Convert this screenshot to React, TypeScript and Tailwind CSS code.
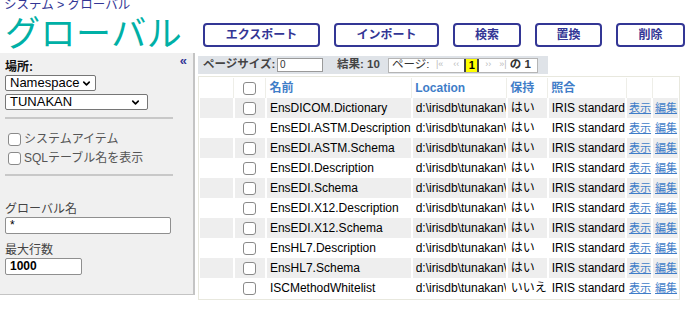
import { ChevronDown } from 'lucide-react'

const rows = [
  ['EnsDICOM.Dictionary', 'はい'],
  ['EnsEDI.ASTM.Description', 'はい'],
  ['EnsEDI.ASTM.Schema', 'はい'],
  ['EnsEDI.Description', 'はい'],
  ['EnsEDI.Schema', 'はい'],
  ['EnsEDI.X12.Description', 'はい'],
  ['EnsEDI.X12.Schema', 'はい'],
  ['EnsHL7.Description', 'はい'],
  ['EnsHL7.Schema', 'はい'],
  ['ISCMethodWhitelist', 'いいえ'],
]

const buttons = [
  { label: 'エクスポート', w: 'w-[117px]' },
  { label: 'インポート', w: 'w-[105px]' },
  { label: '検索', w: 'w-[68px]' },
  { label: '置換', w: 'w-[67px]' },
  { label: '削除', w: 'w-[69px]' },
]

function Box() {
  return <div className="w-[13px] h-[13px] shrink-0 rounded-[3px] border border-[#8a8a8a] bg-white" />
}

export default function App() {
  return (
    <div className="w-[687px] h-[309px] overflow-hidden bg-white font-[Liberation_Sans,Noto_Sans_CJK_JP,sans-serif] text-[12px] text-black">
      {/* header */}
      <div className="flex h-[53px]">
        <div className="w-[196px] pl-[4px]">
          <div className="-mt-[2px] h-[13px] leading-[14px] text-[12.5px] text-[#333695] whitespace-nowrap">システム &gt; グローバル</div>
          <div className="mt-[6px] pl-[1px] text-[35px] leading-[34px] text-[#00b0a6] tracking-[0.5px] whitespace-nowrap">グローバル</div>
        </div>
        <div className="flex items-start pt-[23px] pl-[7px] gap-[14px]">
          {buttons.map((b) => (
            <div
              key={b.label}
              className={`${b.w} h-[24px] flex items-center justify-center rounded-[4px] border-2 border-[#333695] text-[12px] font-bold text-[#333695] whitespace-nowrap`}
            >
              {b.label}
            </div>
          ))}
        </div>
      </div>

      <div className="flex">
        {/* sidebar */}
        <div className="w-[195px] h-[242px] shrink-0 bg-[#f0f0f0] border-r-2 border-b border-[#c4c4c4] pl-[5px] pt-[3px] relative">
          <div className="absolute right-[6px] top-[2px] text-[13px] font-bold leading-[12px] text-[#333695]">«</div>
          <div className="mt-[4px] font-bold text-[12px] leading-[14px] text-[#111]">場所:</div>
          <div className="mt-[1px] w-[91px] h-[16px] flex items-center justify-between border border-[#767676] rounded-[2px] bg-white pl-[4px] pr-[3px] text-[13px] leading-[14px]">
            Namespace
            <ChevronDown className="w-[11px] h-[11px]" strokeWidth={3.5} />
          </div>
          <div className="mt-[3px] w-[143px] h-[16px] flex items-center justify-between border border-[#767676] rounded-[2px] bg-white pl-[4px] pr-[6px] text-[13px] leading-[14px]">
            TUNAKAN
            <ChevronDown className="w-[11px] h-[11px]" strokeWidth={3.5} />
          </div>
          <div className="mt-[7px] w-[168px] border-t-2 border-[#c8c8c8]" />
          <div className="mt-[13px] ml-[3px] h-[14px] flex items-center gap-[3px] text-[12px] leading-[14px] text-[#555]">
            <Box />
            <span>システムアイテム</span>
          </div>
          <div className="mt-[5px] ml-[3px] h-[14px] flex items-center gap-[3px] text-[12px] leading-[14px] text-[#555]">
            <Box />
            <span>SQLテーブル名を表示</span>
          </div>
          <div className="mt-[9px] w-[168px] border-t-2 border-[#c8c8c8]" />
          <div className="mt-[26px] text-[12px] leading-[14px] text-[#444]">グローバル名</div>
          <div className="mt-[1px] w-[166px] h-[17px] border border-[#8f8f8f] rounded-[2px] bg-white pl-[4px] text-[12px] leading-[15px]">*</div>
          <div className="mt-[9px] text-[12px] leading-[14px] text-[#444]">最大行数</div>
          <div className="mt-[1px] w-[77px] h-[17px] border border-[#8f8f8f] rounded-[2px] bg-white pl-[4px] text-[12px] font-bold leading-[15px]">1000</div>
        </div>

        {/* content */}
        <div className="pl-[3px] pt-[3px]">
          <div className="w-[350px] h-[18px] bg-[#dfe3e8] flex items-center pl-[5px] text-[11.5px] font-bold text-[#444] whitespace-nowrap">
            <span className="w-[74px]">ページサイズ:</span>
            <div className="w-[46px] h-[14px] bg-white border border-[#9a9a9a] pl-[2px] text-[10px] font-normal leading-[12px] text-[#333]">0</div>
            <span className="ml-[14px] w-[41px]">結果: 10</span>
            <div className="ml-[10px] h-[15px] w-[150px] bg-white border border-[#b5b5b5] flex items-center pl-[3px]">
              <span className="w-[36px] font-normal text-[#333]">ページ:</span>
              <span className="ml-[8px] text-[9px] font-normal text-[#bbb]">|«</span>
              <span className="ml-[10px] text-[9px] font-normal text-[#bbb]">‹‹</span>
              <span className="ml-[5px] h-[13px] w-[15px] bg-[#ffff00] border-x-2 border-[#444] flex items-center justify-center text-[11px] text-black">1</span>
              <span className="ml-[6px] text-[9px] font-normal text-[#bbb]">››</span>
              <span className="ml-[8px] text-[9px] font-normal text-[#bbb]">»|</span>
              <span className="ml-[3px] text-[#333]">の 1</span>
            </div>
          </div>

          <div className="mt-[2px] w-[482px] border border-[#e8e8de] p-[1px]">
            <table className="border-collapse text-[12px]">
              <thead>
                <tr className="h-[20px] text-left text-[#3f7dc8] font-bold">
                  <th className="w-[35px] border-r border-[#eeeee8]" />
                  <th className="w-[33px] border-r border-[#eeeee8]">
                    <div className="flex justify-center"><Box /></div>
                  </th>
                  <th className="w-[143px] pl-[3px] border-r border-[#eeeee8] font-bold">名前</th>
                  <th className="w-[94px] pl-[3px] border-r border-[#eeeee8] font-bold">Location</th>
                  <th className="w-[40px] pl-[3px] border-r border-[#eeeee8] font-bold">保持</th>
                  <th className="w-[78px] pl-[3px] border-r border-[#eeeee8] font-bold">照合</th>
                  <th className="w-[26px] border-r border-[#eeeee8]" />
                  <th className="w-[26px]" />
                </tr>
              </thead>
              <tbody>
                {rows.map(([name, keep], i) => (
                  <tr key={name} className={`h-[20px] ${i % 2 === 0 ? 'bg-[#eeeeee]' : 'bg-white'}`}>
                    <td className="border-r-2 border-white" />
                    <td className="border-r-2 border-white">
                      <div className="flex justify-center"><Box /></div>
                    </td>
                    <td className="pl-[3px] border-r-2 border-white whitespace-nowrap">{name}</td>
                    <td className="pl-[3px] border-r-2 border-white whitespace-nowrap">
                      <div className="w-[90px] overflow-hidden">d:\irisdb\tunakan\</div>
                    </td>
                    <td className="pl-[3px] border-r-2 border-white whitespace-nowrap">{keep}</td>
                    <td className="pl-[3px] border-r-2 border-white whitespace-nowrap">IRIS standard</td>
                    <td className="pl-[2px] border-r-2 border-white text-[11px] text-[#3f7dc8] underline whitespace-nowrap">表示</td>
                    <td className="pl-[2px] text-[11px] text-[#3f7dc8] underline whitespace-nowrap">編集</td>
                  </tr>
                ))}
              </tbody>
            </table>
          </div>
        </div>
      </div>
    </div>
  )
}
